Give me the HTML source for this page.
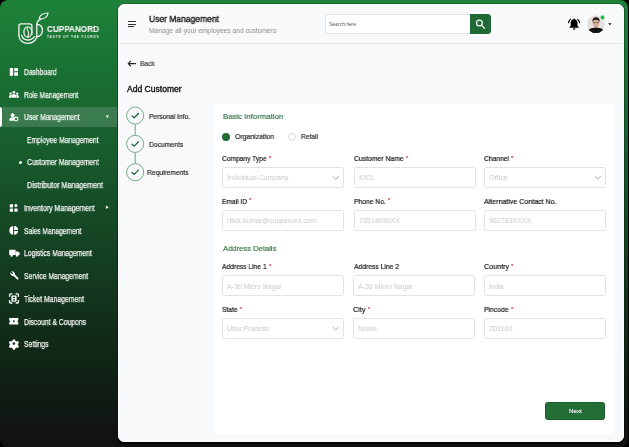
<!DOCTYPE html>
<html><head><meta charset="utf-8">
<style>
*{margin:0;padding:0;box-sizing:border-box}
html,body{width:629px;height:447px;overflow:hidden;background:#000;font-family:"Liberation Sans",sans-serif;position:relative}
#frame{position:absolute;left:0;top:0;width:628.2px;height:447px;border-radius:8px 8px 8px 8px;overflow:hidden;
 background:linear-gradient(180deg,rgb(30,130,57) 0%,rgb(26,117,52) 12.3%,rgb(24,92,45) 33.6%,rgb(22,79,40) 44%,rgb(20,61,32) 59.3%,rgb(16,36,22) 81.2%,rgb(17,18,17) 98%)}
.t{position:absolute;white-space:nowrap;line-height:1;transform-origin:0 0;will-change:transform}
.a{position:absolute}
#panel{position:absolute;left:118px;top:4.2px;width:506px;height:437.8px;background:#f8f9fb;border:1px solid #fff;border-radius:6px;box-shadow:0 0 0.6px 0.6px rgba(0,0,0,.35),0 1.5px 1px rgba(0,0,0,.9)}
#hdiv{position:absolute;left:119px;top:43px;width:504px;height:1px;background:#e6e7ea}
#card{position:absolute;left:213.9px;top:102.7px;width:400.4px;height:331.3px;background:#fff;border-radius:3px}
#logo svg{position:absolute}
.inp{position:absolute;height:21px;border:1px solid #e3e3e3;border-radius:2.5px;background:#fff}
.chev{position:absolute;width:4px;height:4px;border-right:1px solid #9a9a9a;border-bottom:1px solid #9a9a9a;transform:rotate(45deg)}
.circ{position:absolute;width:17.4px;height:17.4px;border:1px solid #5d9a6d;border-radius:50%;background:#fff}
.ck{position:absolute;width:6px;height:3.4px;border-left:1.3px solid #1d6a33;border-bottom:1.3px solid #1d6a33;transform:rotate(-45deg)}
.vl{position:absolute;width:1px;background:#5d9a6d}
</style></head><body>
<div id="frame">
 <!-- active band -->
 <div class="a" style="left:2.3px;top:106.7px;width:114.5px;height:20.6px;background:rgba(255,255,255,.15)"></div>
 <div class="a" style="left:0;top:106.7px;width:2.4px;height:20.6px;background:#fff;border-radius:0 2px 2px 0"></div>
 <!-- bullet -->
 <div class="a" style="left:19.2px;top:161.1px;width:3.1px;height:3.1px;border-radius:50%;background:#fff"></div>
 <!-- carets -->
 <svg class="a" style="left:0;top:0" width="118" height="447" viewBox="0 0 118 447">
  <path d="M105.8 115.6h3.3l-1.65 2.5z" fill="#fff"/>
  <path d="M105.9 205.6v3.5l2.8-1.75z" fill="#fff"/>
 </svg>
</div>
<div id="panel"></div>
<div id="hdiv"></div>
<!-- hamburger -->
<div class="a" style="left:128px;top:21.2px;width:8.4px;height:1.1px;background:#333"></div>
<div class="a" style="left:128px;top:23.6px;width:8.4px;height:1.1px;background:#333"></div>
<div class="a" style="left:128px;top:26px;width:5.8px;height:1.1px;background:#333"></div>
<!-- search -->
<div class="a" style="left:325px;top:14.2px;width:150px;height:19.5px;border:1px solid #e2e3e8;border-radius:3px;background:#fff"></div>
<div class="a" style="left:469.8px;top:13.9px;width:21px;height:19.9px;background:#1f6a35;border-radius:0 3.5px 3.5px 0"></div>
<svg class="a" style="left:469.8px;top:13.9px" width="21" height="20" viewBox="0 0 21 20">
 <circle cx="9.4" cy="9" r="2.9" fill="none" stroke="#fff" stroke-width="1.2"/>
 <line x1="11.5" y1="11.1" x2="14.6" y2="14.4" stroke="#fff" stroke-width="1.2" stroke-linecap="round"/>
</svg>
<!-- bell -->
<svg class="a" style="left:0;top:0" width="629" height="60" viewBox="0 0 629 60">
 <path d="M574.1 19.3c-2.1 0-3.4 1.6-3.4 3.7v2.7l-1.5 2h9.8l-1.5-2v-2.7c0-2.1-1.3-3.7-3.4-3.7z" fill="#000"/>
 <circle cx="574.1" cy="19.2" r="0.8" fill="#000"/>
 <path d="M573 28.2h2.2v.5a1.1 1.1 0 0 1-2.2 0z" fill="#000"/>
 <path d="M570.4 19.4c-1 .8-1.6 1.9-1.8 3.2M577.8 19.4c1 .8 1.6 1.9 1.8 3.2" stroke="#000" stroke-width="1.2" fill="none" stroke-linecap="round"/>
 <defs><clipPath id="cp"><circle cx="595.9" cy="24.1" r="8.9"/></clipPath></defs>
 <circle cx="595.9" cy="24.1" r="8.9" fill="#e5e0dd"/>
 <g clip-path="url(#cp)">
  <ellipse cx="596" cy="33.8" rx="8.8" ry="6" fill="#121212"/>
  <rect x="594.3" y="24.5" width="3.4" height="4.5" fill="#c49a85"/>
  <ellipse cx="596" cy="22.6" rx="3.4" ry="4.1" fill="#d6ad98"/>
  <path d="M592.3 22.3c-.3-3.4 1.3-5 3.7-5s4.1 1.5 3.7 5c-.3-1.5-1-2.4-3.7-2.5-2.7.1-3.4 1-3.7 2.5z" fill="#231a16"/>
  <path d="M593.3 22.6h2.1M596.6 22.6h2.1" stroke="#3a3a3a" stroke-width=".8"/>
  <path d="M589 29.2q7 -2.8 14 0v8h-14z" fill="#121212"/>
 </g>
 <circle cx="602.5" cy="17.4" r="2.4" fill="#2fb84a" stroke="#f8f9fb" stroke-width="0.7"/>
 <path d="M608.1 23.2h3.5l-1.75 2.1z" fill="#111"/>
</svg>
<!-- back arrow -->
<svg class="a" style="left:0;top:0" width="200" height="80" viewBox="0 0 200 80">
 <path d="M128.3 63.6H135.6M130.6 61.2L128.2 63.6L130.6 66" stroke="#262626" stroke-width="1.1" fill="none" stroke-linecap="round" stroke-linejoin="round"/>
</svg>
<!-- stepper -->
<svg class="a" style="left:0;top:0" width="629" height="447" viewBox="0 0 629 447">
 <path d="M135.2 124.6V134.9M135.2 152.9V163.2" stroke="#6fa57d" stroke-width="1"/>
 <circle cx="135.15" cy="115.6" r="8.55" fill="none" stroke="#6fa57d" stroke-width="0.95"/>
 <path d="M132 115.9l2.2 1.9 4.3-4.3" fill="none" stroke="#1d6330" stroke-width="1.25" stroke-linecap="round" stroke-linejoin="round"/>
 <circle cx="135.15" cy="143.9" r="8.55" fill="none" stroke="#6fa57d" stroke-width="0.95"/>
 <path d="M132 144.2l2.2 1.9 4.3-4.3" fill="none" stroke="#1d6330" stroke-width="1.25" stroke-linecap="round" stroke-linejoin="round"/>
 <circle cx="135.15" cy="172.2" r="8.55" fill="none" stroke="#6fa57d" stroke-width="0.95"/>
 <path d="M132 172.5l2.2 1.9 4.3-4.3" fill="none" stroke="#1d6330" stroke-width="1.25" stroke-linecap="round" stroke-linejoin="round"/>
</svg>
<div id="card"></div>
<!-- radios -->
<div class="a" style="left:222.3px;top:133px;width:8.1px;height:8.1px;border-radius:50%;background:#1e6b34"></div>
<div class="a" style="left:287.6px;top:133px;width:8.1px;height:8.1px;border-radius:50%;border:1px solid #d9d9d9;background:#fcfcfc"></div>
<!-- inputs -->
<div class="inp" style="left:222.3px;top:167.0px;width:121.7px"></div>
<div class="inp" style="left:354.2px;top:167.0px;width:121.85px"></div>
<div class="inp" style="left:484.2px;top:167.0px;width:122.2px"></div>
<div class="inp" style="left:222.3px;top:209.9px;width:121.7px"></div>
<div class="inp" style="left:354.2px;top:209.9px;width:121.85px"></div>
<div class="inp" style="left:484.2px;top:209.9px;width:122.2px"></div>
<div class="inp" style="left:222.3px;top:275.2px;width:121.7px"></div>
<div class="inp" style="left:353.3px;top:275.2px;width:121.85px"></div>
<div class="inp" style="left:484.2px;top:275.2px;width:122.2px"></div>
<div class="inp" style="left:222.3px;top:317.9px;width:121.7px"></div>
<div class="inp" style="left:353.3px;top:317.9px;width:121.85px"></div>
<div class="inp" style="left:484.2px;top:317.9px;width:122.2px"></div>
<svg class="a" style="left:0;top:0" width="629" height="447" viewBox="0 0 629 447">
 <path d="M333.2 176.6l2.6 2.5 2.6-2.5M595.3 176.6l2.6 2.5 2.6-2.5M333.2 327.4l2.6 2.5 2.6-2.5" fill="none" stroke="#a0a0a0" stroke-width="0.9" stroke-linecap="round" stroke-linejoin="round"/>
</svg>
<!-- next -->
<div class="a" style="left:545.2px;top:401.5px;width:59.8px;height:18.6px;background:#226e36;border:0.6px solid #1b5e2d;border-radius:2.5px"></div>
<!--ICONS-->
<div id="logo"><svg class="a" style="left:0;top:0" width="60" height="50" viewBox="0 0 60 50">
<g fill="none" stroke="#f0f0f0" stroke-width="1.35" stroke-linecap="round">
 <path d="M18.9 35.7V26Q18.9 23.8 21.1 23.8H29.7Q31.9 23.8 31.9 26V34.5"/>
 <path d="M21.6 35.3C22.5 38.4 24.8 40 27.6 40C30.6 40 33 38.7 34.6 36.6"/>
 <path d="M18.9 35.7C19.2 40.2 23 43.3 27.6 43.3C31.5 43.3 35 41 36.8 37.6V24.5C36.8 21.8 38.3 20.4 40.6 19.4"/>
 <path d="M36.8 24.4C40.3 24.6 42.4 27 42.4 30.3C42.4 33.8 40.2 36.4 36.8 36.8"/>
 <ellipse cx="27.8" cy="32" rx="3.9" ry="5.2"/>
 <path d="M27.3 27.7C26.1 29.8 29.2 31.3 28.6 33.6C28.2 35 27.8 36 28.4 37.2" stroke-width="1.1"/>
 <path d="M39.2 18.8C39.3 15.2 43.2 12.9 48.1 13C47.7 16.9 44.4 19.5 39.2 18.8Z" stroke-width="1.2"/>
</g>
</svg></div>
<svg class="a" style="left:0;top:0" width="629" height="447" viewBox="0 0 629 447">
<g fill="#fff" stroke="none">
 <!-- dashboard -->
 <rect x="9.8" y="67.9" width="3.3" height="7.9" rx="0.5"/>
 <rect x="14.2" y="67.9" width="3.8" height="3.3" rx="0.5"/>
 <rect x="14.2" y="72.3" width="3.8" height="3.5" rx="0.5"/>
 <!-- role -->
 <circle cx="13.9" cy="92.3" r="1.3"/>
 <circle cx="10.6" cy="93.6" r="1.2"/>
 <circle cx="17.2" cy="93.6" r="1.2"/>
 <path d="M11.6 97.8v-1.6c0-1.2 1-2.1 2.3-2.1s2.3.9 2.3 2.1v1.6z"/>
 <path d="M8.9 97.8v-1.3c0-.9.8-1.6 1.8-1.6.5 0 .9.1 1.2.4-.4.4-.5.9-.5 1.4v1.1z"/>
 <path d="M18.9 97.8v-1.3c0-.9-.8-1.6-1.8-1.6-.5 0-.9.1-1.2.4.4.4.5.9.5 1.4v1.1z"/>
 <!-- user mgmt -->
 <circle cx="12.6" cy="115.2" r="1.9"/>
 <path d="M9.3 120.8v-1.2c0-1.4 1.4-2.3 3.3-2.3 .7 0 1.3.1 1.8.3-.4.5-.6 1.1-.6 1.8 0 .5.1 1 .4 1.4z"/>
 <circle cx="16.1" cy="119" r="1.9" fill="none" stroke="#fff" stroke-width="1.1"/>
 <!-- inventory -->
 <rect x="9.8" y="204.3" width="3.2" height="3.2" rx="0.3"/>
 <rect x="9.8" y="208.6" width="3.2" height="3.2" rx="0.3"/>
 <rect x="14.3" y="208.6" width="3.2" height="3.2" rx="0.3"/>
 <rect x="14.6" y="204.3" width="2.6" height="2.6" transform="rotate(45 15.9 205.6)"/>
 <!-- sales pie -->
 <path d="M13.1 226.1a4.4 4.4 0 0 0 0 8.7z"/>
 <path d="M14.1 226.1a4.4 4.4 0 0 1 4.1 3.9h-4.1z"/>
 <path d="M14.1 230.9h4.1a4.4 4.4 0 0 1-4.1 3.9z"/>
 <!-- truck -->
 <rect x="9.2" y="249.7" width="6.4" height="5.4" rx="0.4"/>
 <path d="M15.6 251.4h2c.6 0 1 .3 1.3.8l.7 1.3v1.6h-4z"/>
 <circle cx="11.6" cy="255.6" r="1.2"/>
 <circle cx="17.1" cy="255.6" r="1.2"/>
 <!-- wrench -->
 <path d="M10.4 272.3a2.8 2.8 0 0 0 3.2 3.6l3.6 3.6a1 1 0 0 0 1.3-1.3l-3.6-3.6a2.8 2.8 0 0 0-3.6-3.2l1.8 1.8-.9 1z"/>
 <!-- ticket -->
 <path d="M9.6 296.2v-1.4c0-.5.4-.9.9-.9h1.4M16.1 293.9h1.4c.5 0 .9.4.9.9v1.4M18.4 300.7v1.4c0 .5-.4.9-.9.9h-1.4M11.9 303h-1.4c-.5 0-.9-.4-.9-.9v-1.4" fill="none" stroke="#fff" stroke-width="1.4" stroke-linecap="round"/>
 <path d="M11.4 296.6c0-.7.5-1.2 1.2-1.2h2.8c.7 0 1.2.5 1.2 1.2v4c0 .7-.5 1.2-1.2 1.2h-2.8c-.7 0-1.2-.5-1.2-1.2zM12.9 296.7v1.3h2.2v-1.3zM12.9 299.2v1.3h2.2v-1.3z" fill-rule="evenodd"/>
 <!-- discount -->
 <path d="M9.2 318.1h9.1v2.1a1.2 1.2 0 0 0 0 2.3v2h-9.1v-2a1.2 1.2 0 0 0 0-2.3z"/>
 <!-- gear -->
 <path d="M12.9 339.4h2l.4 1.4 1.3.7 1.4-.4 1 1.7-1 1v1.5l1 1-1 1.7-1.4-.4-1.3.7-.4 1.5h-2l-.4-1.5-1.3-.7-1.4.4-1-1.7 1-1v-1.5l-1-1 1-1.7 1.4.4 1.3-.7z" fill-rule="evenodd"/>
</g>
<g fill="#1b4a27">
 <circle cx="13.9" cy="321.3" r="1"/>
 <circle cx="13.9" cy="343.6" r="1.3" fill="#163823"/>
</g>
</svg>

<div class="t" style="left:23.80px;top:67.70px;font-size:8.5px;color:#f4f7f4;transform:scaleX(0.7888);-webkit-text-stroke:0.25px #f4f7f4;">Dashboard</div>
<div class="t" style="left:23.80px;top:90.70px;font-size:8.5px;color:#f4f7f4;transform:scaleX(0.7832);-webkit-text-stroke:0.25px #f4f7f4;">Role Management</div>
<div class="t" style="left:23.90px;top:113.30px;font-size:8.5px;color:#f4f7f4;transform:scaleX(0.7966);-webkit-text-stroke:0.25px #f4f7f4;">User Management</div>
<div class="t" style="left:26.70px;top:135.80px;font-size:8.5px;color:#f4f7f4;transform:scaleX(0.7964);-webkit-text-stroke:0.25px #f4f7f4;">Employee Management</div>
<div class="t" style="left:26.70px;top:158.40px;font-size:8.5px;color:#f4f7f4;transform:scaleX(0.8095);-webkit-text-stroke:0.25px #f4f7f4;">Customer Management</div>
<div class="t" style="left:26.70px;top:181.10px;font-size:8.5px;color:#f4f7f4;transform:scaleX(0.8378);-webkit-text-stroke:0.25px #f4f7f4;">Distributor Management</div>
<div class="t" style="left:23.90px;top:203.60px;font-size:8.5px;color:#f4f7f4;transform:scaleX(0.8155);-webkit-text-stroke:0.25px #f4f7f4;">Inventory Management</div>
<div class="t" style="left:23.90px;top:226.80px;font-size:8.5px;color:#f4f7f4;transform:scaleX(0.7810);-webkit-text-stroke:0.25px #f4f7f4;">Sales Management</div>
<div class="t" style="left:23.90px;top:249.10px;font-size:8.5px;color:#f4f7f4;transform:scaleX(0.7960);-webkit-text-stroke:0.25px #f4f7f4;">Logistics Management</div>
<div class="t" style="left:23.90px;top:272.20px;font-size:8.5px;color:#f4f7f4;transform:scaleX(0.7968);-webkit-text-stroke:0.25px #f4f7f4;">Service Management</div>
<div class="t" style="left:23.90px;top:294.90px;font-size:8.5px;color:#f4f7f4;transform:scaleX(0.8072);-webkit-text-stroke:0.25px #f4f7f4;">Ticket Management</div>
<div class="t" style="left:23.90px;top:317.50px;font-size:8.5px;color:#f4f7f4;transform:scaleX(0.8001);-webkit-text-stroke:0.25px #f4f7f4;">Discount &amp; Coupons</div>
<div class="t" style="left:23.90px;top:340.10px;font-size:8.5px;color:#f4f7f4;transform:scaleX(0.7944);-webkit-text-stroke:0.25px #f4f7f4;">Settings</div>
<div class="t" style="left:47.20px;top:24.81px;font-size:9.2px;color:#eeeeee;font-weight:bold;transform:scaleX(0.8872);-webkit-text-stroke:0.15px #eee;">CUPPANORD</div>
<div class="t" style="left:47.30px;top:35.71px;font-size:3.3px;color:#e8e8e8;font-weight:bold;letter-spacing:0.773px;">TASTE OF THE FJORDS</div>
<div class="t" style="left:148.60px;top:14.71px;font-size:9.2px;color:#161616;transform:scaleX(0.9249);-webkit-text-stroke:0.35px #161616;">User Management</div>
<div class="t" style="left:148.60px;top:27.02px;font-size:7.3px;color:#8c8c8c;transform:scaleX(0.9154);">Manage all your employees and customers</div>
<div class="t" style="left:329.30px;top:21.12px;font-size:6.0px;color:#5a5a5a;transform:scaleX(0.8321);">Search here</div>
<div class="t" style="left:139.70px;top:60.05px;font-size:7.5px;color:#404040;transform:scaleX(0.8816);-webkit-text-stroke:0.2px #404040;">Back</div>
<div class="t" style="left:127.00px;top:85.27px;font-size:8.3px;color:#111;transform:scaleX(1.0311);-webkit-text-stroke:0.35px #111;">Add Customer</div>
<div class="t" style="left:148.90px;top:112.57px;font-size:7.6px;color:#262626;transform:scaleX(0.8764);-webkit-text-stroke:0.2px #262626;">Personal Info.</div>
<div class="t" style="left:148.90px;top:141.47px;font-size:7.6px;color:#262626;transform:scaleX(0.8949);-webkit-text-stroke:0.2px #262626;">Documents</div>
<div class="t" style="left:147.20px;top:168.97px;font-size:7.6px;color:#262626;transform:scaleX(0.8793);-webkit-text-stroke:0.2px #262626;">Requirements</div>
<div class="t" style="left:222.90px;top:112.54px;font-size:8.1px;color:#2a6f3e;transform:scaleX(0.9636);-webkit-text-stroke:0.15px #2a6f3e;">Basic Information</div>
<div class="t" style="left:235.10px;top:132.77px;font-size:7.6px;color:#262626;transform:scaleX(0.9120);-webkit-text-stroke:0.2px #262626;">Organization</div>
<div class="t" style="left:300.70px;top:132.77px;font-size:7.6px;color:#262626;transform:scaleX(0.8800);-webkit-text-stroke:0.2px #262626;">Retail</div>
<div class="t" style="left:222.80px;top:245.04px;font-size:8.1px;color:#2a6f3e;transform:scaleX(0.9414);-webkit-text-stroke:0.15px #2a6f3e;">Address Details</div>
<div class="t" style="left:222.30px;top:154.73px;font-size:8.0px;color:#1b1b1b;transform:scaleX(0.8311);-webkit-text-stroke:0.22px #1b1b1b;">Company Type</div>
<div class="t" style="left:268.80px;top:155.59px;font-size:5.8px;color:#e8413f;-webkit-text-stroke:0.2px #e8413f;">*</div>
<div class="t" style="left:354.40px;top:154.73px;font-size:8.0px;color:#1b1b1b;transform:scaleX(0.8516);-webkit-text-stroke:0.22px #1b1b1b;">Customer Name</div>
<div class="t" style="left:405.90px;top:155.59px;font-size:5.8px;color:#e8413f;-webkit-text-stroke:0.2px #e8413f;">*</div>
<div class="t" style="left:484.40px;top:154.73px;font-size:8.0px;color:#1b1b1b;transform:scaleX(0.8422);-webkit-text-stroke:0.22px #1b1b1b;">Channel</div>
<div class="t" style="left:511.40px;top:155.59px;font-size:5.8px;color:#e8413f;-webkit-text-stroke:0.2px #e8413f;">*</div>
<div class="t" style="left:222.30px;top:197.53px;font-size:8.0px;color:#1b1b1b;transform:scaleX(0.8271);-webkit-text-stroke:0.22px #1b1b1b;">Email ID</div>
<div class="t" style="left:249.20px;top:198.39px;font-size:5.8px;color:#e8413f;-webkit-text-stroke:0.2px #e8413f;">*</div>
<div class="t" style="left:354.40px;top:197.53px;font-size:8.0px;color:#1b1b1b;transform:scaleX(0.8411);-webkit-text-stroke:0.22px #1b1b1b;">Phone No.</div>
<div class="t" style="left:388.10px;top:198.39px;font-size:5.8px;color:#e8413f;-webkit-text-stroke:0.2px #e8413f;">*</div>
<div class="t" style="left:484.40px;top:197.53px;font-size:8.0px;color:#1b1b1b;transform:scaleX(0.8825);-webkit-text-stroke:0.22px #1b1b1b;">Alternative Contact No.</div>
<div class="t" style="left:222.30px;top:262.93px;font-size:8.0px;color:#1b1b1b;transform:scaleX(0.8357);-webkit-text-stroke:0.22px #1b1b1b;">Address Line 1</div>
<div class="t" style="left:268.80px;top:263.79px;font-size:5.8px;color:#e8413f;-webkit-text-stroke:0.2px #e8413f;">*</div>
<div class="t" style="left:353.50px;top:262.93px;font-size:8.0px;color:#1b1b1b;transform:scaleX(0.8432);-webkit-text-stroke:0.22px #1b1b1b;">Address Line 2</div>
<div class="t" style="left:484.40px;top:262.93px;font-size:8.0px;color:#1b1b1b;transform:scaleX(0.8960);-webkit-text-stroke:0.22px #1b1b1b;">Country</div>
<div class="t" style="left:511.40px;top:263.79px;font-size:5.8px;color:#e8413f;-webkit-text-stroke:0.2px #e8413f;">*</div>
<div class="t" style="left:222.30px;top:305.73px;font-size:8.0px;color:#1b1b1b;transform:scaleX(0.8351);-webkit-text-stroke:0.22px #1b1b1b;">State</div>
<div class="t" style="left:239.80px;top:306.59px;font-size:5.8px;color:#e8413f;-webkit-text-stroke:0.2px #e8413f;">*</div>
<div class="t" style="left:353.30px;top:305.73px;font-size:8.0px;color:#1b1b1b;transform:scaleX(0.9073);-webkit-text-stroke:0.22px #1b1b1b;">City</div>
<div class="t" style="left:367.70px;top:306.59px;font-size:5.8px;color:#e8413f;-webkit-text-stroke:0.2px #e8413f;">*</div>
<div class="t" style="left:484.40px;top:305.73px;font-size:8.0px;color:#1b1b1b;transform:scaleX(0.8509);-webkit-text-stroke:0.22px #1b1b1b;">Pincode</div>
<div class="t" style="left:510.90px;top:306.59px;font-size:5.8px;color:#e8413f;-webkit-text-stroke:0.2px #e8413f;">*</div>
<div class="t" style="left:226.60px;top:174.22px;font-size:7.3px;color:#c9c9c9;transform:scaleX(0.9517);">Individual-Company</div>
<div class="t" style="left:358.80px;top:174.22px;font-size:7.3px;color:#c9c9c9;transform:scaleX(0.9156);">IOCL</div>
<div class="t" style="left:488.80px;top:174.22px;font-size:7.3px;color:#c9c9c9;transform:scaleX(0.9771);">Office</div>
<div class="t" style="left:226.60px;top:216.92px;font-size:7.3px;color:#c9c9c9;transform:scaleX(0.9374);">ritick.kumar@cuppanord.com</div>
<div class="t" style="left:358.80px;top:216.92px;font-size:7.3px;color:#c9c9c9;transform:scaleX(0.9759);">73518090XX</div>
<div class="t" style="left:488.80px;top:216.92px;font-size:7.3px;color:#c9c9c9;transform:scaleX(0.9558);">962783XXXX</div>
<div class="t" style="left:226.60px;top:282.52px;font-size:7.3px;color:#c9c9c9;transform:scaleX(0.9580);">A-36 Micro Nagar</div>
<div class="t" style="left:357.70px;top:282.52px;font-size:7.3px;color:#c9c9c9;transform:scaleX(0.9580);">A-36 Micro Nagar</div>
<div class="t" style="left:488.80px;top:282.52px;font-size:7.3px;color:#c9c9c9;transform:scaleX(0.9160);">India</div>
<div class="t" style="left:226.60px;top:325.02px;font-size:7.3px;color:#c9c9c9;transform:scaleX(0.9392);">Uttar Pradesh</div>
<div class="t" style="left:357.70px;top:325.02px;font-size:7.3px;color:#c9c9c9;transform:scaleX(0.9699);">Noida</div>
<div class="t" style="left:488.80px;top:325.02px;font-size:7.3px;color:#c9c9c9;transform:scaleX(0.9908);">201101</div>
<div class="t" style="left:568.90px;top:408.14px;font-size:6.1px;color:#f4f4f4;transform:scaleX(1.0205);-webkit-text-stroke:0.15px #f4f4f4;">Next</div>
</body></html>
